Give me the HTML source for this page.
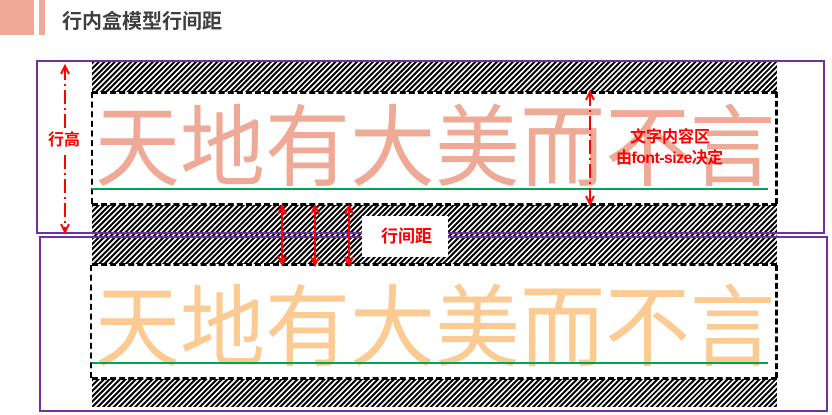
<!DOCTYPE html>
<html><head><meta charset="utf-8"><style>
body{margin:0;width:832px;height:415px;background:#fff;position:relative;overflow:hidden;font-family:"Liberation Sans","Noto Sans CJK SC",sans-serif}
.a{position:absolute}
.hatch{background:repeating-linear-gradient(135deg,#000 0 2.1px,#fff 2.1px 3.8px)}
.box{border:2px solid #7030a0}
.dash{border-top:3px dashed #000}
.vd{border-left:2px dashed #000}
.big{font-family:"Noto Sans CJK SC",sans-serif;font-size:85px;line-height:1;white-space:nowrap;letter-spacing:0px}
.red{color:#f00;font-weight:bold;font-family:"Liberation Sans","Noto Sans CJK SC",sans-serif}
</style></head><body>
<div class="a" style="left:0;top:0;width:34px;height:35px;background:#eeaa96"></div>
<div class="a" style="left:39px;top:0;width:6px;height:35px;background:#eeaa96"></div>
<div class="a" style="left:62px;top:7px;font-size:20px;font-weight:bold;color:#3f3f3f;font-family:'Noto Sans CJK SC',sans-serif;line-height:26px">行内盒模型行间距</div>

<div class="a hatch" style="left:92px;top:62px;width:685px;height:30px"></div>
<div class="a hatch" style="left:92px;top:205px;width:685px;height:59px"></div>
<div class="a hatch" style="left:92px;top:379px;width:685px;height:28px"></div>

<div class="a dash" style="left:92px;top:91px;width:685px"></div>
<div class="a dash" style="left:92px;top:203px;width:685px"></div>
<div class="a dash" style="left:92px;top:263px;width:685px"></div>
<div class="a dash" style="left:92px;top:377px;width:685px"></div>
<div class="a vd" style="left:91px;top:92px;height:112px"></div>
<div class="a vd" style="left:775px;top:92px;height:112px;border-left-width:3px"></div>
<div class="a vd" style="left:90px;top:265px;height:113px"></div>
<div class="a vd" style="left:775px;top:265px;height:113px;border-left-width:3px"></div>

<div class="a box" style="left:36px;top:60px;width:785px;height:170px"></div>
<div class="a box" style="left:39px;top:236px;width:785px;height:172px"></div>

<div class="a big" style="left:95px;top:96px;color:#eeaa96;transform:scaleY(1.05);transform-origin:top left">天地有大美而不言</div>
<div class="a" style="left:92px;top:188px;width:676px;height:2px;background:#00a651"></div>
<div class="a big" style="left:95px;top:276px;color:#fccb94;transform:scaleY(1.05);transform-origin:top left">天地有大美而不言</div>
<div class="a" style="left:92px;top:362px;width:676px;height:2px;background:#00a651"></div>

<div class="a" style="left:362px;top:216px;width:86px;height:41px;background:#fff"></div>
<div class="a red" style="left:381px;top:227px;font-size:17px;line-height:20px">行间距</div>

<div class="a red" style="left:630px;top:127px;font-size:16px;line-height:21px">文字内容区</div>
<div class="a red" style="left:616px;top:148px;font-size:16px;line-height:21px;letter-spacing:-0.6px">由font-size决定</div>
<div class="a red" style="left:48px;top:131px;font-size:16px;line-height:20px;background:#fff">行高</div>

<svg class="a" style="left:0;top:0" width="832" height="415">
<g stroke="#f00" stroke-width="2" fill="none">
<line x1="65" y1="66" x2="65" y2="128" stroke-dasharray="14 4 2 4"/>
<line x1="65" y1="155" x2="65" y2="232" stroke-dasharray="14 4 2 4"/>
<polyline points="61,74 65,66 69,74"/>
<polyline points="61,224 65,232 69,224"/>
<line x1="590" y1="92" x2="590" y2="203" stroke-dasharray="14 4 2 4"/>
<polyline points="586,100 590,92 594,100"/>
<polyline points="586,196 590,204 594,196"/>
<line x1="282" y1="206" x2="282" y2="264"/>
<polyline points="278,214 282,206 286,214"/><polyline points="278,256 282,264 286,256"/>
<line x1="315" y1="206" x2="315" y2="265"/>
<polyline points="311,214 315,206 319,214"/><polyline points="311,257 315,265 319,257"/>
<line x1="349" y1="206" x2="349" y2="265"/>
<polyline points="345,214 349,206 353,214"/><polyline points="345,257 349,265 353,257"/>
</g>
</svg>
</body></html>
